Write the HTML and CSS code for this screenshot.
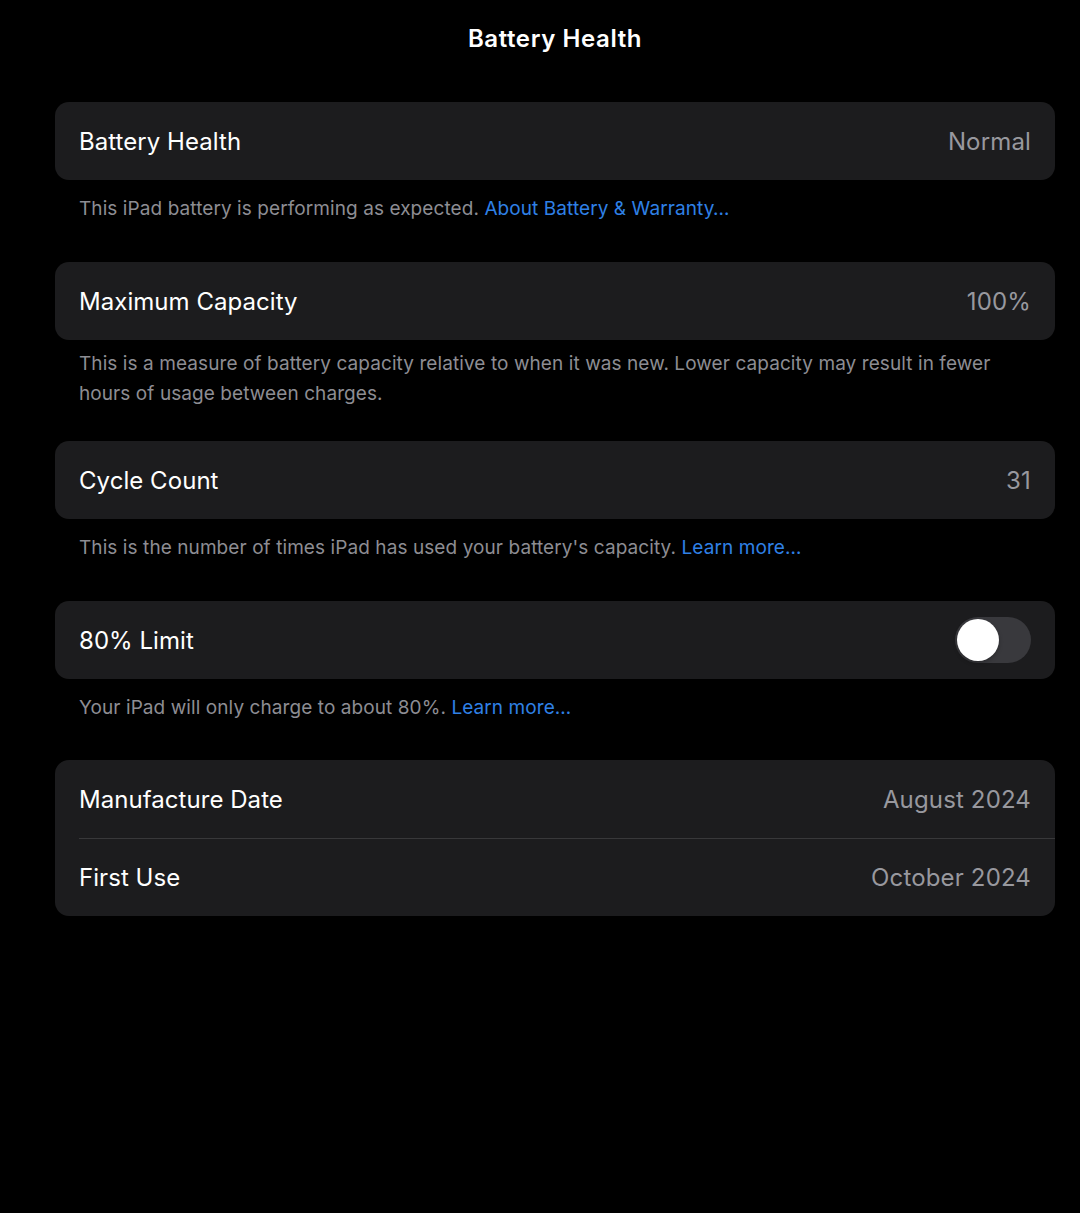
FILE: index.html
```html
<!DOCTYPE html>
<html lang="en">
<head>
<meta charset="utf-8">
<title>Battery Health</title>
<link rel="stylesheet" href="styles.css">
</head>
<body>
<div class="screen">
  <header class="nav">Battery Health</header>
  <main class="list">
    <section class="group">
      <div class="row"><span class="label">Battery Health</span><span class="value">Normal</span></div>
    </section>
    <p class="footer">This iPad battery is performing as expected. <a class="link">About Battery &amp; Warranty…</a></p>

    <section class="group">
      <div class="row"><span class="label">Maximum Capacity</span><span class="value">100%</span></div>
    </section>
    <p class="footer footer-multi">This is a measure of battery capacity relative to when it was new. Lower capacity may result in fewer hours of usage between charges.</p>

    <section class="group">
      <div class="row"><span class="label">Cycle Count</span><span class="value">31</span></div>
    </section>
    <p class="footer">This is the number of times iPad has used your battery's capacity. <a class="link">Learn more…</a></p>

    <section class="group">
      <div class="row"><span class="label">80% Limit</span><span class="toggle"><span class="knob"></span></span></div>
    </section>
    <p class="footer footer-last">Your iPad will only charge to about 80%. <a class="link">Learn more…</a></p>

    <section class="group">
      <div class="row"><span class="label">Manufacture Date</span><span class="value">August 2024</span></div>
      <div class="row row-sep"><span class="label">First Use</span><span class="value">October 2024</span></div>
    </section>
  </main>
</div>
</body>
</html>
```
FILE: styles.css
```css
html, body {
  margin: 0;
  padding: 0;
  background: #000;
}
body {
  font-family: Inter, "Noto Sans", "Liberation Sans", sans-serif;
  color: #fff;
  width: 1080px;
  height: 1213px;
  overflow: hidden;
}
.screen {
  padding-left: 55px;
  width: 1000px;
}
.nav {
  height: 76px;
  display: flex;
  align-items: center;
  justify-content: center;
  font-size: 24px;
  font-weight: 600;
  letter-spacing: 0.6px;
}
.list {
  padding-top: 26px;
  display: flex;
  flex-direction: column;
}
.group {
  background: #1c1c1e;
  border-radius: 14px;
  overflow: hidden;
}
.row {
  height: 78px;
  padding: 0 24px;
  display: flex;
  align-items: center;
  justify-content: space-between;
  position: relative;
  box-sizing: border-box;
}
.row-sep::before {
  content: "";
  position: absolute;
  left: 24px;
  right: 0;
  top: 0;
  height: 1px;
  background: #38383a;
}
.label {
  font-size: 24px;
  letter-spacing: 0.05px;
  color: #fff;
}
.value {
  font-size: 24px;
  letter-spacing: 0.15px;
  color: #98989e;
}
.footer {
  margin: 0;
  padding: 14px 24px 0;
  font-size: 19px;
  line-height: 30px;
  color: #8d8d93;
  letter-spacing: 0.08px;
  margin-bottom: 38px;
}
.footer-multi {
  padding-top: 9px;
  margin-bottom: 32px;
}
.footer-last {
  margin-bottom: 37px;
}
.link {
  color: #2f80e6;
}
.toggle {
  width: 76px;
  height: 46px;
  border-radius: 23px;
  background: #39393d;
  display: flex;
  align-items: center;
  padding-left: 2px;
  box-sizing: border-box;
}
.knob {
  width: 42px;
  height: 42px;
  border-radius: 50%;
  background: #fff;
  box-shadow: 0 2px 4px rgba(0,0,0,0.25);
}
```
